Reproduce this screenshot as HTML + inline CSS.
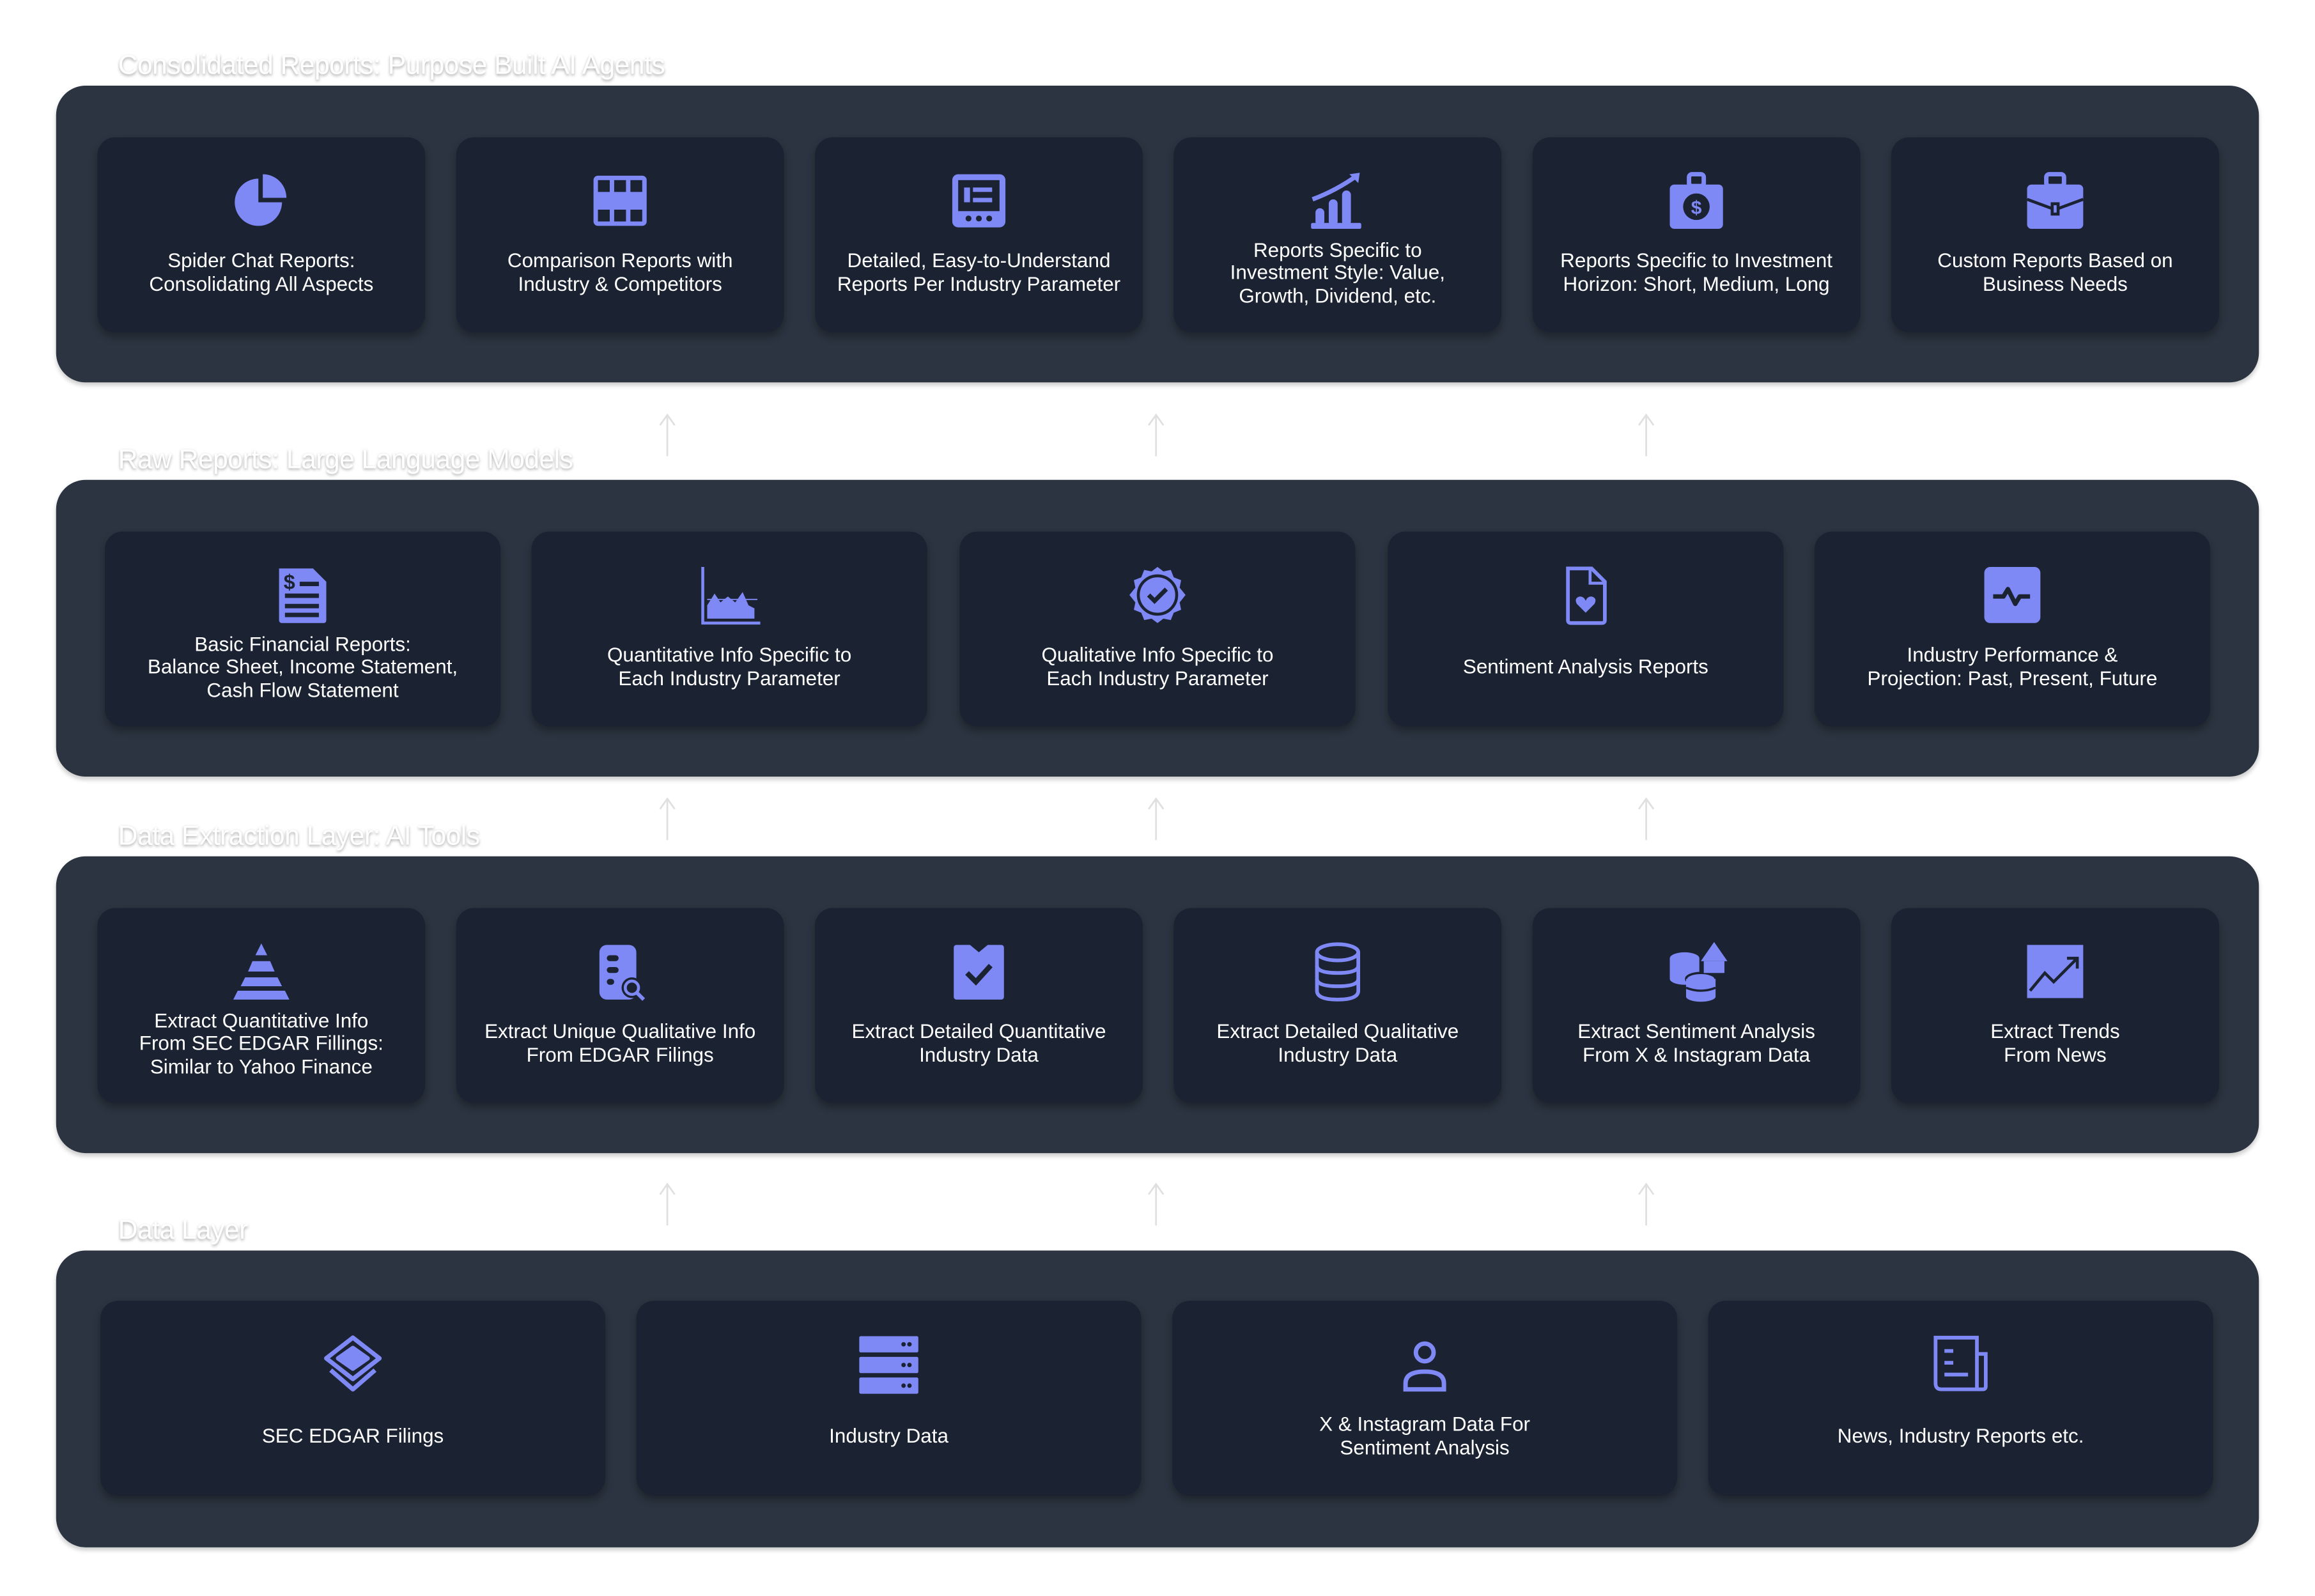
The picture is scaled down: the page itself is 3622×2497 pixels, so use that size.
<!DOCTYPE html>
<html><head><meta charset="utf-8"><style>
html,body{margin:0;padding:0;background:#fff;}
body{width:3622px;height:2497px;overflow:hidden;}
#w{position:absolute;left:0;top:0;width:1568px;height:1081px;transform:scale(2.30995);transform-origin:0 0;font-family:"Liberation Sans",sans-serif;}
.lbl{position:absolute;left:80px;font-size:18.4px;color:#fff;text-shadow:0 1px 2px rgba(0,0,0,.35);letter-spacing:-.2px;}
.pan{position:absolute;left:38px;width:1492px;height:201px;background:#2b3440;border-radius:20px;box-shadow:0 2px 3px rgba(0,0,0,.2);}
.c{position:absolute;height:132px;background:#1b2332;border-radius:12px;box-shadow:0 3px 5px rgba(0,0,0,.3);color:#fff;text-align:center;font-size:13.6px;line-height:15.6px;}
.c svg{position:absolute;left:50%;top:22px;margin-left:-21px;width:42px;height:42px;}
.c .t{position:absolute;left:0;right:0;top:0;bottom:0;display:flex;align-items:center;justify-content:center;padding-top:52px;box-sizing:border-box;}
.ar{position:absolute;width:14px;height:30px;}
</style></head><body><div id="w">

<div class="lbl" style="top:33px">Consolidated Reports: Purpose Built AI Agents</div>
<div class="pan" style="top:58px"></div>
<div class="lbl" style="top:300px">Raw Reports: Large Language Models</div>
<div class="pan" style="top:325px"></div>
<div class="lbl" style="top:555px">Data Extraction Layer: AI Tools</div>
<div class="pan" style="top:580px"></div>
<div class="lbl" style="top:822px">Data Layer</div>
<div class="pan" style="top:847px"></div>

<svg class="ar" style="left:445px;top:280px" viewBox="0 0 14 30"><path d="M7 29V2M2 8L7 1L12 8" stroke="#e0e0e0" stroke-width="1.2" fill="none"/></svg>
<svg class="ar" style="left:776px;top:280px" viewBox="0 0 14 30"><path d="M7 29V2M2 8L7 1L12 8" stroke="#e0e0e0" stroke-width="1.2" fill="none"/></svg>
<svg class="ar" style="left:1108px;top:280px" viewBox="0 0 14 30"><path d="M7 29V2M2 8L7 1L12 8" stroke="#e0e0e0" stroke-width="1.2" fill="none"/></svg>
<svg class="ar" style="left:445px;top:540px" viewBox="0 0 14 30"><path d="M7 29V2M2 8L7 1L12 8" stroke="#e0e0e0" stroke-width="1.2" fill="none"/></svg>
<svg class="ar" style="left:776px;top:540px" viewBox="0 0 14 30"><path d="M7 29V2M2 8L7 1L12 8" stroke="#e0e0e0" stroke-width="1.2" fill="none"/></svg>
<svg class="ar" style="left:1108px;top:540px" viewBox="0 0 14 30"><path d="M7 29V2M2 8L7 1L12 8" stroke="#e0e0e0" stroke-width="1.2" fill="none"/></svg>
<svg class="ar" style="left:445px;top:801px" viewBox="0 0 14 30"><path d="M7 29V2M2 8L7 1L12 8" stroke="#e0e0e0" stroke-width="1.2" fill="none"/></svg>
<svg class="ar" style="left:776px;top:801px" viewBox="0 0 14 30"><path d="M7 29V2M2 8L7 1L12 8" stroke="#e0e0e0" stroke-width="1.2" fill="none"/></svg>
<svg class="ar" style="left:1108px;top:801px" viewBox="0 0 14 30"><path d="M7 29V2M2 8L7 1L12 8" stroke="#e0e0e0" stroke-width="1.2" fill="none"/></svg>

<div class="c" style="left:66px;top:93px;width:222px"><svg viewBox="0 0 42 42"><path d="M19 6A16 16 0 1 0 35 22H19Z" fill="#7f89f5"/><path d="M22 3A16 16 0 0 1 38 19H22Z" fill="#7f89f5"/></svg><div class="t">Spider Chat Reports:<br>Consolidating All Aspects</div></div>
<div class="c" style="left:309px;top:93px;width:222px"><svg viewBox="0 0 42 42"><rect x="3" y="4" width="36" height="34" rx="3" fill="#7f89f5"/><g fill="#1b2332"><rect x="6" y="7" width="8" height="8"/><rect x="17" y="7" width="8" height="8"/><rect x="28" y="7" width="8" height="8"/><rect x="6" y="27" width="8" height="8"/><rect x="17" y="27" width="8" height="8"/><rect x="28" y="27" width="8" height="8"/></g></svg><div class="t">Comparison Reports with<br>Industry &amp; Competitors</div></div>
<div class="c" style="left:552px;top:93px;width:222px"><svg viewBox="0 0 42 42"><rect x="3" y="3" width="36" height="36" rx="4" fill="#7f89f5"/><rect x="7" y="7" width="28" height="21" fill="#1b2332"/><rect x="17" y="12" width="13" height="3" fill="#7f89f5"/><rect x="17" y="19" width="13" height="3" fill="#7f89f5"/><rect x="11" y="12" width="4" height="10" fill="#7f89f5"/><g fill="#1b2332"><circle cx="14" cy="33" r="2"/><circle cx="21" cy="33" r="2"/><circle cx="28" cy="33" r="2"/></g></svg><div class="t">Detailed, Easy-to-Understand<br>Reports Per Industry Parameter</div></div>
<div class="c" style="left:795px;top:93px;width:222px"><svg viewBox="0 0 42 42"><path d="M4 20Q20 14 34 4" stroke="#7f89f5" stroke-width="3" fill="none"/><path d="M29 3L36 2L35 9Z" fill="#7f89f5"/><rect x="6" y="26" width="6" height="12" rx="3" fill="#7f89f5"/><rect x="15" y="20" width="6" height="18" rx="3" fill="#7f89f5"/><rect x="24" y="14" width="6" height="24" rx="3" fill="#7f89f5"/><rect x="3" y="36" width="34" height="4" rx="1" fill="#7f89f5"/></svg><div class="t">Reports Specific to<br>Investment Style: Value,<br>Growth, Dividend, etc.</div></div>
<div class="c" style="left:1038px;top:93px;width:222px"><svg viewBox="0 0 42 42"><rect x="16" y="3" width="10" height="8" rx="2" fill="none" stroke="#7f89f5" stroke-width="3"/><rect x="3" y="10" width="36" height="30" rx="3" fill="#7f89f5"/><circle cx="21" cy="25" r="9" fill="#1b2332"/><text x="21" y="30" text-anchor="middle" font-size="13" font-weight="bold" fill="#7f89f5" font-family="Liberation Sans">$</text></svg><div class="t">Reports Specific to Investment<br>Horizon: Short, Medium, Long</div></div>
<div class="c" style="left:1281px;top:93px;width:222px"><svg viewBox="0 0 42 42"><rect x="15" y="3" width="12" height="8" rx="2" fill="none" stroke="#7f89f5" stroke-width="3"/><rect x="2" y="10" width="38" height="30" rx="3" fill="#7f89f5"/><path d="M2 20L21 27L40 20" stroke="#1b2332" stroke-width="2" fill="none"/><rect x="18" y="22" width="6" height="9" fill="#1b2332"/><rect x="20" y="24" width="2" height="5" fill="#7f89f5"/></svg><div class="t">Custom Reports Based on<br>Business Needs</div></div>

<div class="c" style="left:71px;top:360px;width:268px"><svg viewBox="0 0 42 42"><path d="M5 3H28L37 12V38Q37 40 35 40H7Q5 40 5 38Z" fill="#7f89f5"/><text x="12" y="17" text-anchor="middle" font-size="14" font-weight="bold" fill="#1b2332" font-family="Liberation Sans">$</text><g fill="#1b2332"><rect x="19" y="12" width="13" height="3"/><rect x="9" y="20" width="23" height="3"/><rect x="9" y="27" width="23" height="3"/><rect x="9" y="33" width="23" height="3"/></g></svg><div class="t">Basic Financial Reports:<br>Balance Sheet, Income Statement,<br>Cash Flow Statement</div></div>
<div class="c" style="left:360px;top:360px;width:268px"><svg viewBox="0 0 42 42"><path d="M3 2V40H42" stroke="#7f89f5" stroke-width="2" fill="none"/><path d="M6 37V28L11 20L15 26L20 22L25 26L30 19L34 28L38 30V37Z" fill="#7f89f5"/><path d="M6 24H40" stroke="#7f89f5" stroke-width=".8"/></svg><div class="t">Quantitative Info Specific to<br>Each Industry Parameter</div></div>
<div class="c" style="left:650px;top:360px;width:268px"><svg viewBox="0 0 42 42"><path d="M21 2L25 5L30 4L32 9L37 11L36 16L40 21L36 26L37 31L32 33L30 38L25 37L21 40L17 37L12 38L10 33L5 31L6 26L2 21L6 16L5 11L10 9L12 4L17 5Z" fill="#7f89f5"/><circle cx="21" cy="21" r="13" fill="none" stroke="#1b2332" stroke-width="2"/><path d="M15 21L19 25L27 17" stroke="#1b2332" stroke-width="3" fill="none"/></svg><div class="t">Qualitative Info Specific to<br>Each Industry Parameter</div></div>
<div class="c" style="left:940px;top:360px;width:268px"><svg viewBox="0 0 42 42"><path d="M9 3H25L34 12V38Q34 40 32 40H11Q9 40 9 38Z" fill="none" stroke="#7f89f5" stroke-width="2.5"/><path d="M24 3V13H34" fill="none" stroke="#7f89f5" stroke-width="2"/><path d="M21 33L15 27Q13 23 17 22Q20 22 21 25Q22 22 25 22Q29 23 27 27Z" fill="#7f89f5"/></svg><div class="t">Sentiment Analysis Reports</div></div>
<div class="c" style="left:1229px;top:360px;width:268px"><svg viewBox="0 0 42 42"><rect x="2" y="2" width="38" height="38" rx="4" fill="#7f89f5"/><path d="M8 22H15L18 17L23 27L26 22H33" stroke="#1b2332" stroke-width="3" fill="none" stroke-linejoin="round"/></svg><div class="t">Industry Performance &amp;<br>Projection: Past, Present, Future</div></div>

<div class="c" style="left:66px;top:615px;width:222px"><svg viewBox="0 0 42 42"><path d="M21 2L25 10H17Z" fill="#7f89f5"/><path d="M15 14H27L30 21H12Z" fill="#7f89f5"/><path d="M10 25H32L35 31H7Z" fill="#7f89f5"/><path d="M5 34H37L40 40H2Z" fill="#7f89f5"/></svg><div class="t">Extract Quantitative Info<br>From SEC EDGAR Fillings:<br>Similar to Yahoo Finance</div></div>
<div class="c" style="left:309px;top:615px;width:222px"><svg viewBox="0 0 42 42"><rect x="7" y="3" width="25" height="37" rx="5" fill="#7f89f5"/><g fill="#1b2332"><rect x="12" y="10" width="8" height="4" rx="2"/><rect x="12" y="18" width="8" height="4" rx="2"/><rect x="12" y="26" width="5" height="4" rx="2"/><circle cx="29" cy="32" r="7"/></g><circle cx="29" cy="32" r="4.5" fill="none" stroke="#7f89f5" stroke-width="2"/><path d="M32 35L37 40" stroke="#7f89f5" stroke-width="2.5"/></svg><div class="t">Extract Unique Qualitative Info<br>From EDGAR Filings</div></div>
<div class="c" style="left:552px;top:615px;width:222px"><svg viewBox="0 0 42 42"><path d="M4 5Q4 3 6 3H15L21 8L27 3H36Q38 3 38 5V38Q38 40 36 40H6Q4 40 4 38Z" fill="#7f89f5"/><path d="M13 22L19 28L29 17" stroke="#1b2332" stroke-width="3.5" fill="none"/></svg><div class="t">Extract Detailed Quantitative<br>Industry Data</div></div>
<div class="c" style="left:795px;top:615px;width:222px"><svg viewBox="0 0 42 42" fill="none" stroke="#7f89f5" stroke-width="2.5"><ellipse cx="21" cy="8" rx="14" ry="5.5"/><path d="M7 8V34Q7 40 21 40Q35 40 35 34V8"/><path d="M7 17Q7 22 21 22Q35 22 35 17"/><path d="M7 26Q7 31 21 31Q35 31 35 26"/></svg><div class="t">Extract Detailed Qualitative<br>Industry Data</div></div>
<div class="c" style="left:1038px;top:615px;width:222px"><svg viewBox="0 0 42 42"><ellipse cx="13" cy="12" rx="10" ry="4" fill="#7f89f5"/><rect x="3" y="12" width="20" height="14" fill="#7f89f5"/><ellipse cx="13" cy="26" rx="10" ry="4" fill="#7f89f5"/><ellipse cx="24" cy="26" rx="10" ry="4" fill="#7f89f5" stroke="#1b2332" stroke-width="1.5"/><rect x="14" y="26" width="20" height="12" fill="#7f89f5"/><ellipse cx="24" cy="38" rx="10" ry="3.5" fill="#7f89f5"/><path d="M14 32Q24 36 34 32" stroke="#1b2332" stroke-width="1.5" fill="none"/><path d="M33 1L42 14H24Z" fill="#7f89f5"/><rect x="26" y="14" width="14" height="8" fill="#7f89f5"/></svg><div class="t">Extract Sentiment Analysis<br>From X &amp; Instagram Data</div></div>
<div class="c" style="left:1281px;top:615px;width:222px"><svg viewBox="0 0 42 42"><rect x="2" y="3" width="38" height="36" fill="#7f89f5"/><path d="M4 34L14 22L20 28L36 12M29 12H36V19" stroke="#1b2332" stroke-width="2" fill="none"/></svg><div class="t">Extract Trends<br>From News</div></div>

<div class="c" style="left:68px;top:881px;width:342px"><svg viewBox="0 0 42 42" fill="none" stroke="#7f89f5" stroke-width="3" stroke-linejoin="round"><path d="M21 3L39 17L21 31L3 17Z"/><path d="M21 10L31 17L21 24L11 17Z" fill="#7f89f5"/><path d="M6 25L21 38L36 25"/></svg><div class="t">SEC EDGAR Filings</div></div>
<div class="c" style="left:431px;top:881px;width:342px"><svg viewBox="0 0 42 42"><rect x="1" y="2" width="40" height="11" rx="1" fill="#7f89f5"/><rect x="1" y="16" width="40" height="11" rx="1" fill="#7f89f5"/><rect x="1" y="30" width="40" height="11" rx="1" fill="#7f89f5"/><g fill="#1b2332"><circle cx="31" cy="7.5" r="1.5"/><circle cx="35" cy="7.5" r="1.5"/><circle cx="31" cy="21.5" r="1.5"/><circle cx="35" cy="21.5" r="1.5"/><circle cx="31" cy="35.5" r="1.5"/><circle cx="35" cy="35.5" r="1.5"/></g></svg><div class="t">Industry Data</div></div>
<div class="c" style="left:794px;top:881px;width:342px"><svg viewBox="0 0 42 42" fill="none" stroke="#7f89f5" stroke-width="3"><circle cx="21" cy="13" r="6"/><path d="M8 38V34Q8 26 21 26Q34 26 34 34V38Z"/></svg><div class="t">X &amp; Instagram Data For<br>Sentiment Analysis</div></div>
<div class="c" style="left:1157px;top:881px;width:342px"><svg viewBox="0 0 42 42" fill="none" stroke="#7f89f5" stroke-width="2.5"><path d="M4 3H32V38H8Q4 38 4 34Z"/><path d="M32 14H38V36Q38 38 36 38H32"/><path d="M10 12H16M10 20H16M10 28H26" stroke-width="2.5"/></svg><div class="t">News, Industry Reports etc.</div></div>

</div></body></html>
